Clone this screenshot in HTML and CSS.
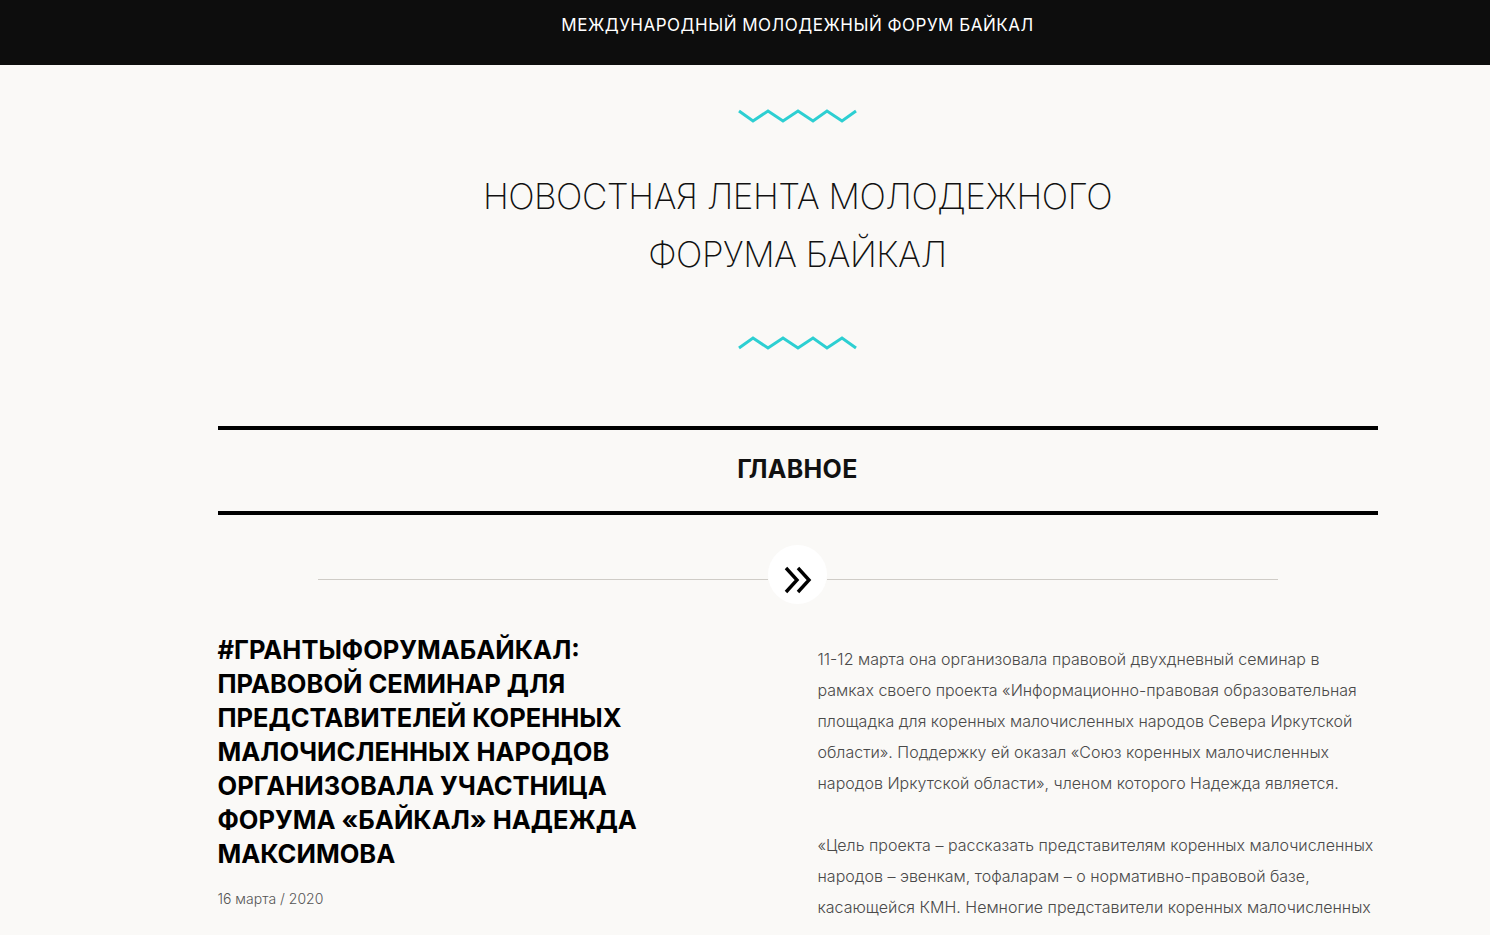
FILE: index.html
```html
<!DOCTYPE html>
<html lang="ru">
<head>
    <meta charset="utf-8">
    <link rel="stylesheet" href="styles.css">
    <title>Новостная лента молодежного форума Байкал</title>
</head>
<body>
<div class="page">
    <header class="topbar">
        <span class="topbar-title">Международный молодежный форум Байкал</span>
    </header>

    <section class="intro">
        <svg class="wave" width="122" height="16" viewBox="0 0 122 16">
            <polyline points="2,3 16,13 31,3 46,13 61,3 76,13 90,3 105,13 119,3" />
        </svg>
        <h1 class="intro-title">Новостная лента молодежного<br>форума Байкал</h1>
        <svg class="wave wave-bottom" width="122" height="16" viewBox="0 0 122 16">
            <polyline points="2,13 16,3 31,13 46,3 61,13 76,3 90,13 105,3 119,13" />
        </svg>
    </section>

    <div class="container">
        <div class="section-head">
            <h2>Главное</h2>
        </div>

        <div class="divider">
            <span class="divider-line"></span>
            <span class="divider-circle">
                <svg width="59" height="59" viewBox="0 0 59 59">
                    <path d="M18 23 L29 35 L18 47" />
                    <path d="M30 23 L41 35 L30 47" />
                </svg>
            </span>
            <span class="divider-line"></span>
        </div>

        <article class="news">
            <div class="news-head">
                <h3 class="news-title">#ГрантыФорумаБайкал: правовой семинар для представителей коренных малочисленных народов организовала участница форума «Байкал» Надежда Максимова</h3>
                <div class="news-date">16 марта / 2020</div>
            </div>
            <div class="news-body">
                <p>11-12 марта она организовала правовой двухдневный семинар в рамках своего проекта «Информационно-правовая образовательная площадка для коренных малочисленных народов Севера Иркутской области». Поддержку ей оказал «Союз коренных малочисленных народов Иркутской области», членом которого Надежда является.</p>
                <p>«Цель проекта – рассказать представителям коренных малочисленных народов – эвенкам, тофаларам – о нормативно-правовой базе, касающейся КМН. Немногие представители коренных малочисленных</p>
            </div>
        </article>
    </div>
</div>
</body>
</html>
```

FILE: styles.css
```css
* {
    margin: 0;
    padding: 0;
    box-sizing: border-box;
}

html, body {
    overflow-x: hidden;
}

body {
    background-color: #faf9f7;
    color: #111;
    font-family: Inter, "Noto Sans", sans-serif;
}

.page {
    width: 1595px;
}

/* top black strip */
.topbar {
    height: 65px;
    background-color: #0d0d0d;
    display: flex;
    justify-content: center;
    padding-top: 15px;
}

.topbar-title {
    color: #fff;
    font-size: 17px;
    line-height: 20px;
    text-transform: uppercase;
    letter-spacing: 0.5px;
}

/* title block with the zigzags */
.intro {
    display: flex;
    flex-direction: column;
    align-items: center;
    padding-top: 43px;
}

.wave polyline {
    fill: none;
    stroke: #2dcfd2;
    stroke-width: 3;
}

.intro-title {
    margin-top: 43px;
    font-size: 35px;
    font-weight: 200;
    line-height: 58px;
    letter-spacing: -0.5px;
    text-align: center;
    text-transform: uppercase;
    color: #111;
}

.wave-bottom {
    margin-top: 52px;
}

.container {
    width: 1160px;
    margin: 0 auto;
}

.section-head {
    margin-top: 75px;
    border-top: 4px solid #000;
    border-bottom: 4px solid #000;
    height: 89px;
    display: flex;
    align-items: center;
    justify-content: center;
    padding-bottom: 4px;
}

.section-head h2 {
    font-size: 25px;
    font-weight: 700;
    text-transform: uppercase;
    letter-spacing: 0.3px;
}

/* line with the arrow button */
.divider {
    width: 960px;
    margin: 30px auto 0;
    display: flex;
    align-items: flex-start;
}

.divider-line {
    flex: 1;
    height: 1px;
    margin-top: 34px;
    background-color: #cfccc7;
}

.divider-circle {
    width: 59px;
    height: 59px;
    border-radius: 50%;
    background-color: #fff;
    display: block;
}

.divider-circle path {
    fill: none;
    stroke: #000;
    stroke-width: 3.4;
}

.news {
    display: grid;
    grid-template-columns: 470px 560px;
    justify-content: space-between;
    margin-top: 29px;
}

.news-title {
    font-size: 25.5px;
    font-weight: 700;
    line-height: 34px;
    text-transform: uppercase;
    color: #000;
}

.news-date {
    margin-top: 19px;
    font-size: 14px;
    font-weight: 300;
    color: #555;
}

.news-body {
    padding-top: 11px;
}

.news-body p {
    font-size: 16px;
    font-weight: 300;
    line-height: 31px;
    color: #4a4a4a;
    margin-bottom: 31px;
}
```
